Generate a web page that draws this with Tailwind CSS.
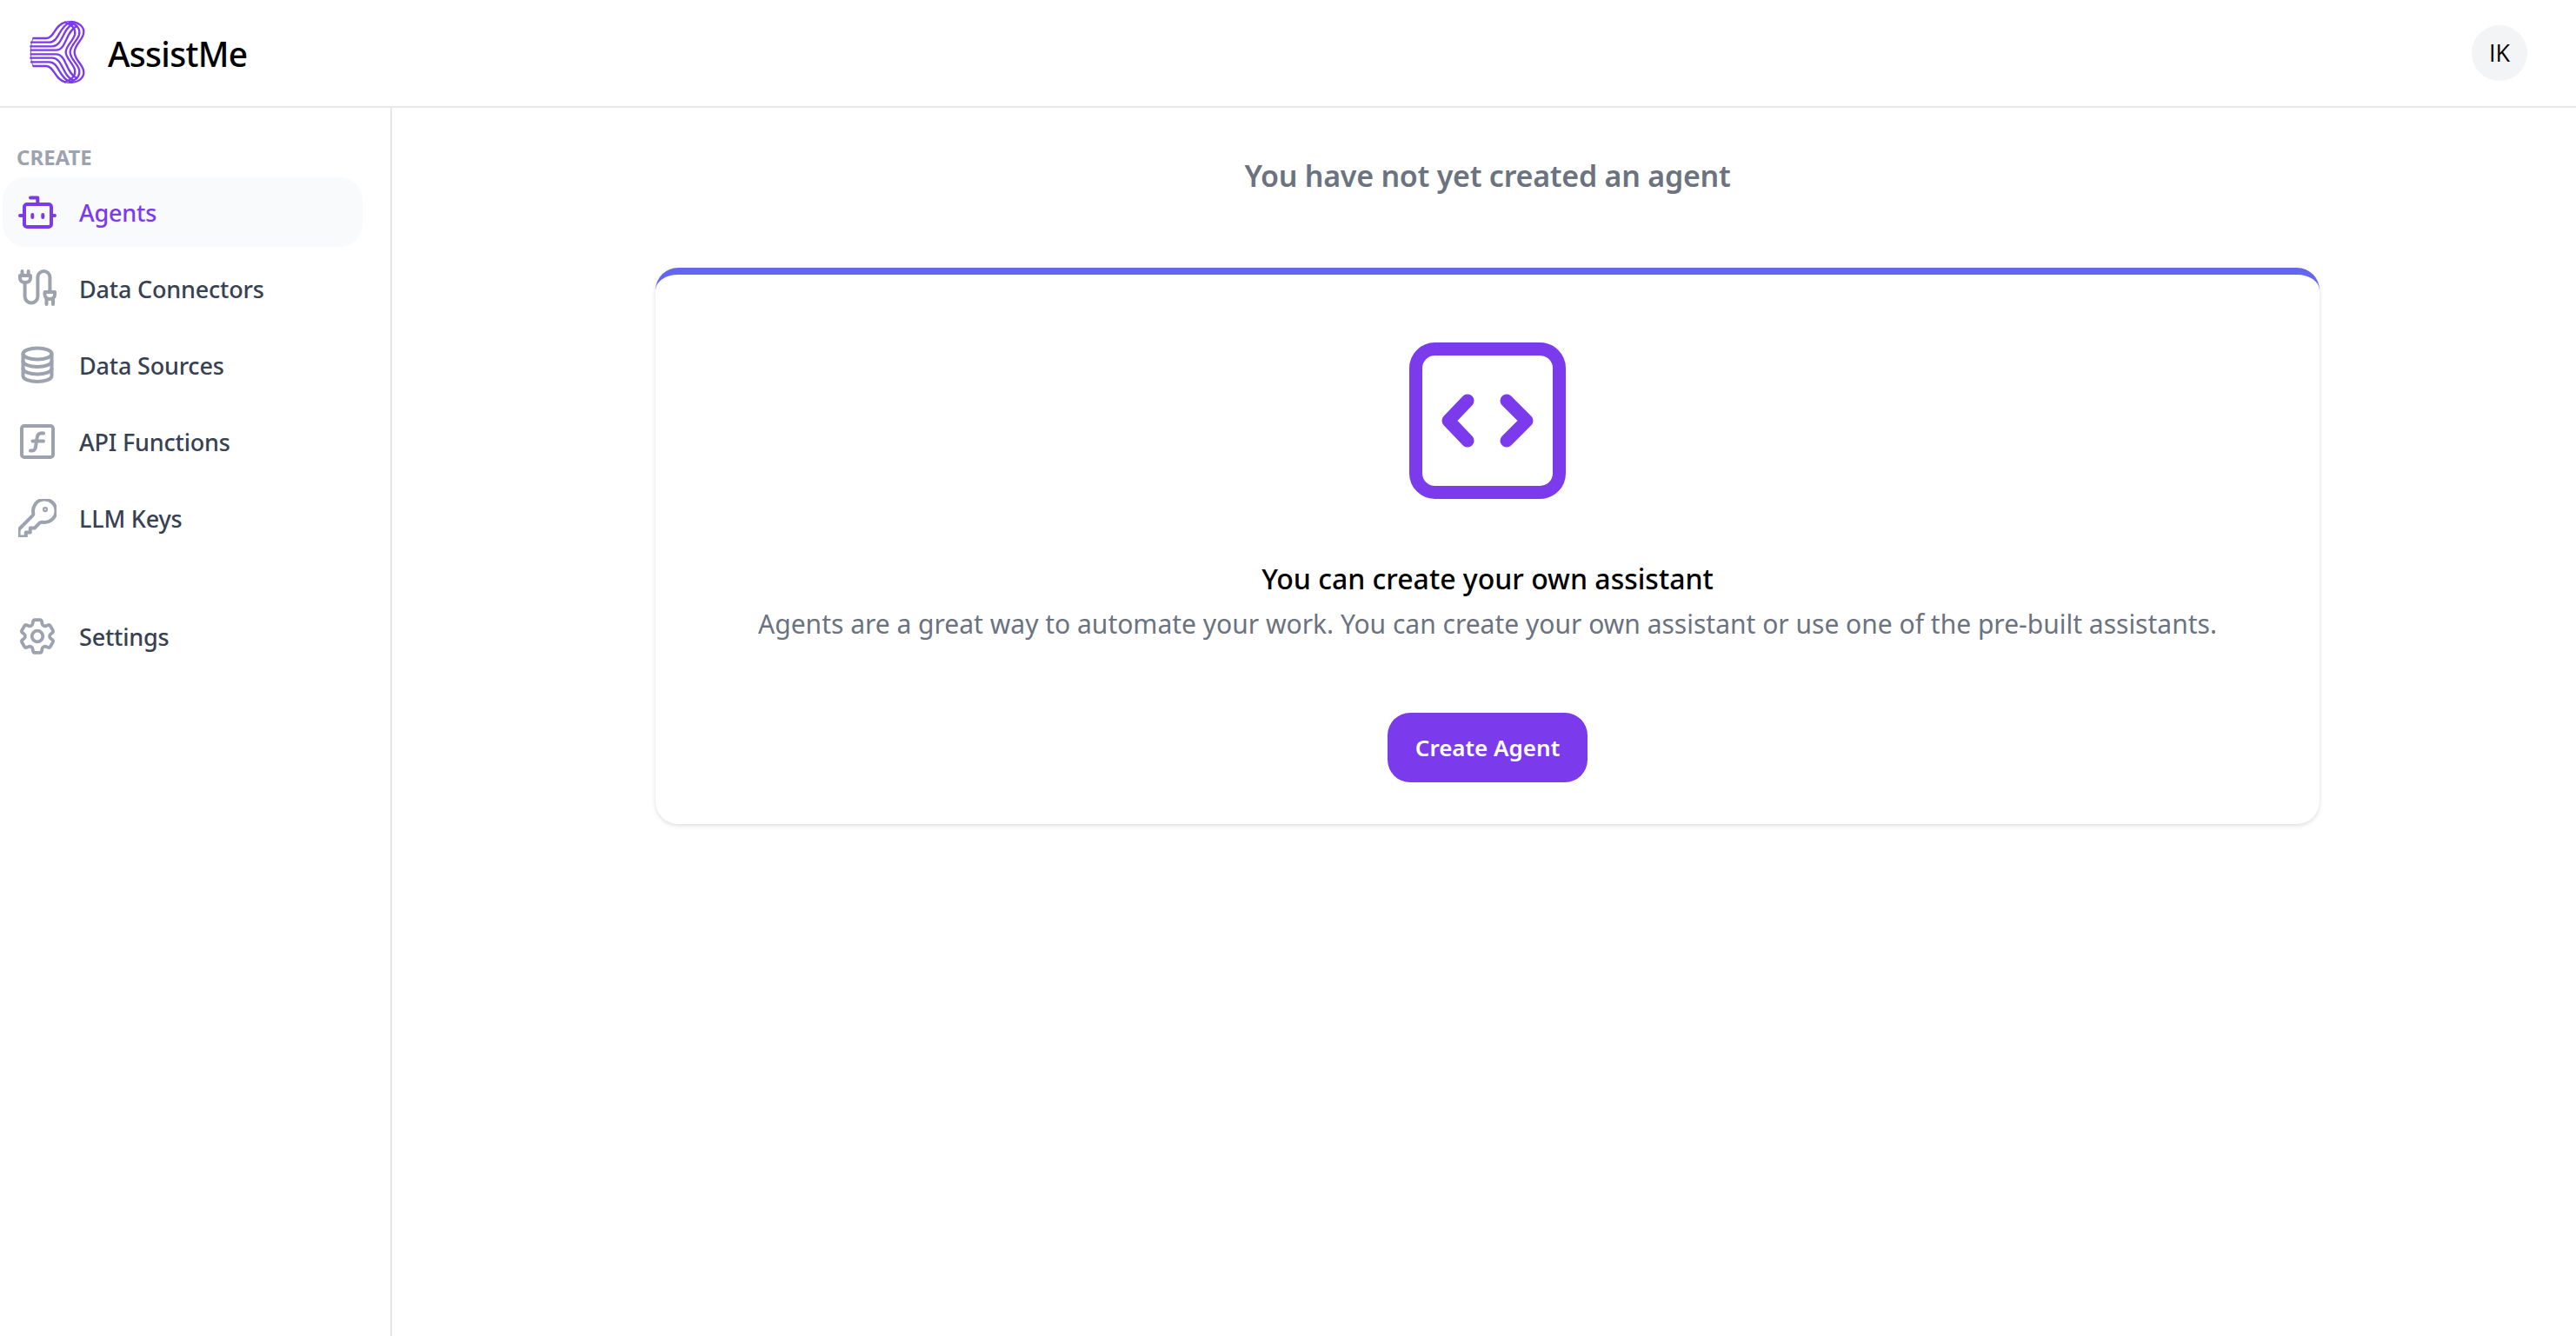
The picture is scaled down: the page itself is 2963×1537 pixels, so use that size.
<!DOCTYPE html>
<html lang="en">
<head>
  <meta charset="UTF-8" />
  <meta name="viewport" content="width=device-width, initial-scale=1.0" />
  <title>AssistMe</title>
  <script src="https://cdn.jsdelivr.net/npm/@tailwindcss/browser@4"></script>
</head>
<body class="bg-white h-screen overflow-hidden flex flex-col font-['Noto_Sans',sans-serif]">
  <!-- Header -->
  <header class="h-[124px] shrink-0 border-b-2 border-[#e5e7eb] flex items-center justify-between pl-[25px] pr-[56px]">
    <div class="flex items-center gap-[19px]">
      <svg class="w-[80px] h-[85px] -mt-[7px]" viewBox="0 0 240 255" fill="none" stroke="#7c3aed" stroke-width="7" stroke-linecap="round">
        <path d="M40 87H85C112 87 112 42 150 32" />
        <path d="M33 101H95C128 101 128 48 165 33" />
        <path d="M31 115H105C142 115 140 52 178 38" />
        <path d="M32 128H118C155 128 150 65 190 45" />
        <path d="M40 183H85C112 183 112 228 150 238" />
        <path d="M33 169H95C128 169 128 222 165 237" />
        <path d="M31 155H105C142 155 140 218 178 232" />
        <path d="M32 142H118C155 142 150 205 190 225" />
        <path d="M170 30C200 32 218 50 213 72C208 95 182 110 182 135C182 160 208 175 213 198C218 220 200 238 170 240" />
        <path d="M165 33C190 38 203 55 198 75C193 95 167 112 167 135C167 158 193 175 198 195C203 215 190 232 165 237" />
        <path d="M150 32C172 40 187 55 183 75C178 95 152 115 152 135C152 155 178 175 183 195C187 215 172 230 150 238" />
        <path d="M40 87C28 100 28 170 40 183" stroke-width="3" />
        <path d="M150 32C158 27 165 27 172 30" stroke-width="3" />
        <path d="M150 238C158 243 165 243 172 240" stroke-width="3" />
      </svg>
      <span class="text-[39px] leading-none font-medium tracking-[-0.7px] text-black">AssistMe</span>
    </div>
    <div class="w-[64px] h-[64px] rounded-full bg-[#f3f4f6] flex items-center justify-center font-['Open_Sans',sans-serif] text-[27px] text-black">IK</div>
  </header>

  <div class="flex flex-1 min-h-0">
    <!-- Sidebar -->
    <aside class="w-[451px] shrink-0 border-r-2 border-[#e5e7eb] pl-[3px] pr-[32px] pt-[40px]">
      <div class="pl-[16px] mb-[6px] text-[24px] leading-[34px] font-bold text-[#9ca3af]">CREATE</div>
      <nav class="flex flex-col gap-[8px]">
        <a class="h-[80px] rounded-[26px] bg-[#f9fafb] flex items-center gap-[26px] pl-[18px] text-[27px] tracking-[-0.2px] font-medium text-[#7c3aed]">
          <svg class="w-[44px] h-[44px]" viewBox="0 0 44 44" fill="none" stroke="#7c3aed" stroke-width="4" stroke-linecap="round" stroke-linejoin="round">
            <rect x="7" y="13" width="31" height="26" rx="3" />
            <path d="M22.300 12V5.500H14" />
            <path d="M2 26H6M39 26H42" />
            <path d="M16.300 25v3M28.300 25v3" />
          </svg>
          <span class="mt-[2px]">Agents</span>
        </a>
        <a class="h-[80px] flex items-center gap-[26px] pl-[18px] text-[27px] tracking-[-0.2px] font-medium text-[#374151]">
          <svg class="w-[44px] h-[44px]" viewBox="0 0 44 44" fill="none" stroke="#9ca3af" stroke-width="4" stroke-linecap="round" stroke-linejoin="round">
            <path d="M4.500 2v5M11.700 2v5" />
            <path d="M2 7H14v3c0 3-2.500 5-6 5S2 13 2 10z" />
            <path d="M7.600 15V31a7.400 7.400 0 0 0 14.800 0V9a7 7 0 0 1 14 0V26" />
            <path d="M30.500 26H42v3c0 3-2.200 5-5.700 5S30.500 32 30.500 29z" />
            <path d="M32.500 34v6M40 34v6" />
          </svg>
          <span class="mt-[2px]">Data Connectors</span>
        </a>
        <a class="h-[80px] flex items-center gap-[26px] pl-[18px] text-[27px] tracking-[-0.2px] font-medium text-[#374151]">
          <svg class="w-[44px] h-[44px]" viewBox="0 0 44 44" fill="none" stroke="#9ca3af" stroke-width="4" stroke-linecap="round" stroke-linejoin="round">
            <ellipse cx="22" cy="9" rx="16.500" ry="6.500" />
            <path d="M5.500 9V34.500c0 3.600 7.400 6.500 16.500 6.500s16.500-2.900 16.500-6.500V9" />
            <path d="M5.500 17.500c0 3.600 7.400 6.500 16.500 6.500s16.500-2.900 16.500-6.500" />
            <path d="M5.500 26c0 3.600 7.400 6.500 16.500 6.500S38.500 29.600 38.500 26" />
          </svg>
          <span class="mt-[2px]">Data Sources</span>
        </a>
        <a class="h-[80px] flex items-center gap-[26px] pl-[18px] text-[27px] tracking-[-0.2px] font-medium text-[#374151]">
          <svg class="w-[44px] h-[44px]" viewBox="0 0 44 44" fill="none" stroke="#9ca3af" stroke-width="4" stroke-linecap="round" stroke-linejoin="round">
            <rect x="4" y="4" width="36" height="36" rx="3" />
            <path d="M29 12.500C24 11.500 22 14 21.500 18L20 28C19.500 32 17.500 33 14 32.500" />
            <path d="M16.500 21.500H29" />
          </svg>
          <span class="mt-[2px]">API Functions</span>
        </a>
        <a class="h-[80px] flex items-center gap-[26px] pl-[18px] text-[27px] tracking-[-0.2px] font-medium text-[#374151]">
          <svg class="w-[44px] h-[44px]" viewBox="2 2 20 20" fill="none" stroke="#9ca3af" stroke-width="1.800" stroke-linecap="round" stroke-linejoin="round">
            <path d="M21.750 8.250a6 6 0 01-7.029 5.912c-.563-.097-1.159.026-1.563.43L10.500 17.250H8.250v2.250H6v2.250H2.250v-2.818c0-.597.237-1.170.659-1.591l6.499-6.499c.404-.404.527-1 .43-1.563A6 6 0 1121.750 8.250z" />
            <circle cx="16.100" cy="7.500" r="0.500" />
          </svg>
          <span class="mt-[2px]">LLM Keys</span>
        </a>
        <a class="mt-[48px] h-[80px] flex items-center gap-[26px] pl-[18px] text-[27px] tracking-[-0.2px] font-medium text-[#374151]">
          <svg class="w-[44px] h-[44px]" viewBox="1.500 1.500 21 21" fill="none" stroke="#9ca3af" stroke-width="1.800" stroke-linecap="round" stroke-linejoin="round">
            <path d="M9.594 3.940c.09-.542.56-.94 1.110-.94h2.593c.55 0 1.020.398 1.110.94l.213 1.281c.063.374.313.686.645.87.074.04.147.083.22.127.324.196.72.257 1.075.124l1.217-.456a1.125 1.125 0 011.370.49l1.296 2.247a1.125 1.125 0 01-.26 1.431l-1.003.827c-.293.24-.438.613-.431.992a6.759 6.759 0 010 .255c-.007.378.138.75.43.99l1.005.828c.424.35.534.954.26 1.430l-1.298 2.247a1.125 1.125 0 01-1.369.491l-1.217-.456c-.355-.133-.75-.072-1.076.124a6.570 6.570 0 01-.22.128c-.331.183-.581.495-.644.869l-.213 1.280c-.09.543-.56.941-1.110.941h-2.594c-.55 0-1.020-.398-1.110-.94l-.213-1.281c-.062-.374-.312-.686-.644-.87a6.520 6.520 0 01-.22-.127c-.325-.196-.72-.257-1.076-.124l-1.217.456a1.125 1.125 0 01-1.369-.49l-1.297-2.247a1.125 1.125 0 01.26-1.431l1.004-.827c.292-.24.437-.613.43-.992a6.932 6.932 0 010-.255c.007-.378-.138-.75-.43-.99l-1.004-.828a1.125 1.125 0 01-.26-1.430l1.297-2.247a1.125 1.125 0 011.370-.491l1.216.456c.356.133.751.072 1.076-.124.072-.044.146-.087.22-.128.332-.183.582-.495.644-.869l.214-1.281z" />
            <circle cx="12" cy="12" r="3" />
          </svg>
          <span class="mt-[2px]">Settings</span>
        </a>
      </nav>
    </aside>

    <!-- Main -->
    <main class="flex-1 min-w-0 pl-[303px] pr-[295px] pt-[53px]">
      <h1 class="text-center text-[34px] leading-[50px] font-semibold tracking-[-0.25px] text-[#6b7280]">You have not yet created an agent</h1>
      <div class="mt-[81px] h-[640px] rounded-[26px] bg-white border-t-[8px] border-[#6366f1] shadow-[0_2px_5px_rgba(0,0,0,0.13)] flex flex-col items-center pt-[78px]">
        <svg class="w-[180px] h-[180px]" viewBox="0 0 180 180" fill="none" stroke="#7c3aed" stroke-width="15" stroke-linecap="round" stroke-linejoin="round">
          <rect x="7.500" y="7.500" width="165" height="165" rx="22" />
          <path d="M67 67L45 90L67 113" />
          <path d="M112 67L135 90L112 113" />
        </svg>
        <h2 class="mt-[68px] text-[32px] leading-[48px] font-medium text-black">You can create your own assistant</h2>
        <p class="mt-[6px] text-[30px] leading-[44px] text-[#6b7280]">Agents are a great way to automate your work. You can create your own assistant or use one of the pre-built assistants.</p>
        <button class="mt-[80px] w-[230px] h-[80px] rounded-[26px] bg-[#7c3aed] text-white text-[26px] font-semibold">Create Agent</button>
      </div>
    </main>
  </div>
</body>
</html>
